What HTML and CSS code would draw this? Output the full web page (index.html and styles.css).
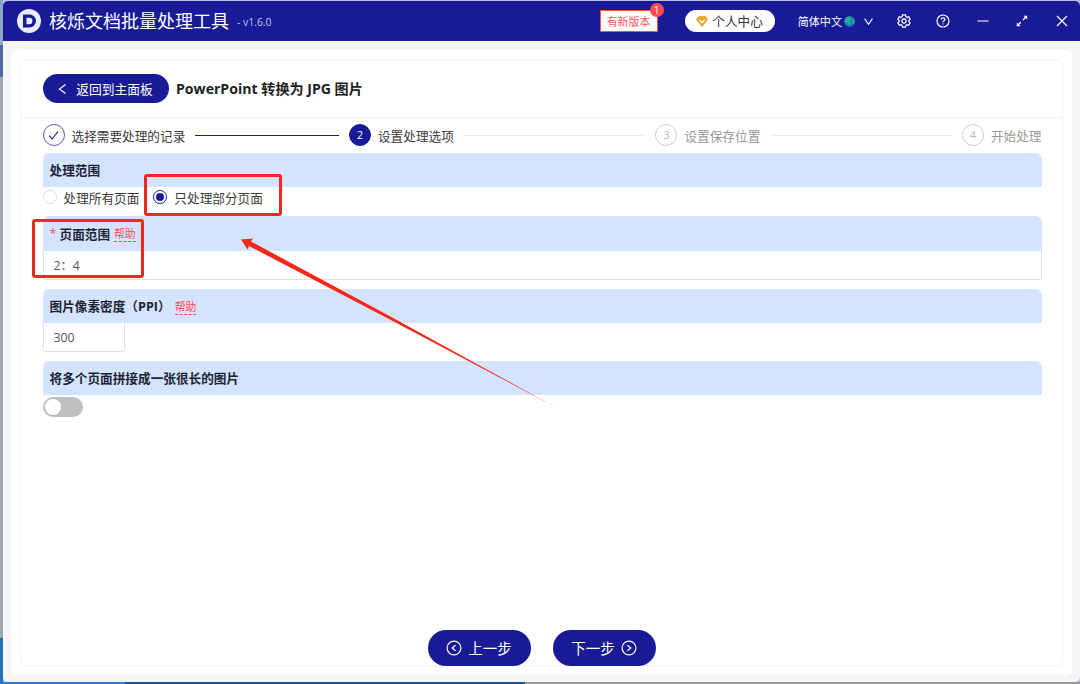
FILE: index.html
```html
<!DOCTYPE html>
<html lang="zh-CN">
<head>
  <meta charset="UTF-8">
  <meta name="viewport" content="width=device-width, initial-scale=1.0">
  <title>核烁文档批量处理工具</title>
  <link rel="stylesheet" href="styles.css">
</head>
<body>
  <div class="window">
    <header class="titlebar">
      <svg class="logo" viewBox="0 0 24 24">
        <circle cx="12" cy="12" r="12" fill="#e9ebff"/>
        <path d="M6 5.5h6.5a6.5 6.5 0 0 1 0 13H6z" fill="#181b95"/>
        <path d="M9.500 8.800h2.700a3.200 3.200 0 0 1 0 6.400H9.500z" fill="#e9ebff"/>
      </svg>
      <span class="app-name">核烁文档批量处理工具</span>
      <span class="version">- v1.6.0</span>

      <div class="new-version">有新版本<span class="badge">1</span></div>
      <div class="account">
        <svg class="gem" viewBox="0 0 12 11">
          <path d="M2.8 0h6.4L12 3.6 6 11 0 3.6z" fill="#f2a32c"/>
          <path d="M3.4 3.8 6 6.7l2.6-2.9" fill="none" stroke="#fff" stroke-width="1.3"/>
        </svg>
        <span>个人中心</span>
      </div>
      <div class="language">
        <span>简体中文</span>
        <svg class="globe" viewBox="0 0 12 12">
          <circle cx="6" cy="6" r="5.7" fill="#1f78bd"/>
          <path d="M1.2 3.2C3 .6 6 .2 7.5.9L6.7 3l1.8.8-2 2.2.8 2-2 2.6-1.6-2.8L.6 6z" fill="#20b08c"/>
          <path d="M8.8 1.2 11.4 4v3L9.6 9 8.4 6.6l1.3-2z" fill="#20b08c"/>
        </svg>
        <svg class="chevron" viewBox="0 0 12 12"><path d="M1.700 2.800 6 9l4.300-6.200"/></svg>
      </div>
      <div class="window-icons">
        <svg viewBox="0 0 14 14"><path d="M5.6.9h2.8l.5 1.8 1 .6 1.8-.5 1.4 2.4-1.3 1.3v1l1.3 1.3-1.4 2.4-1.8-.5-1 .6-.5 1.8H5.6l-.5-1.8-1-.6-1.8.5L.9 8.8 2.2 7.5v-1L.9 5.2l1.4-2.4 1.8.5 1-.6z"/><circle cx="7" cy="7" r="2.1"/></svg>
        <svg viewBox="0 0 14 14"><circle cx="7" cy="7" r="6"/><path d="M5.2 5.600c0-2.400 3.700-2.300 3.700-.1 0 1.300-1.900 1.300-1.900 2.700"/><path d="M7 9.400v1.200"/></svg>
        <svg viewBox="0 0 14 14"><path d="M1.500 7h11"/></svg>
        <svg viewBox="0 0 14 14"><path d="M3 11l3-3M8 6l3-3"/><path class="solid" d="M1.800 12.200V8.400l3.800 3.800zM12.200 1.800v3.800L8.400 1.800z"/></svg>
        <svg viewBox="0 0 14 14"><path d="M2 2l10 10M12 2 2 12"/></svg>
      </div>
    </header>

    <main class="panel">
      <div class="card">
        <div class="card-header">
          <button class="back">
            <svg viewBox="0 0 10 12"><path d="M8.500 1 1.500 6l7 5"/></svg>
            返回到主面板
          </button>
          <h1>PowerPoint 转换为 JPG 图片</h1>
        </div>

        <div class="card-body">
          <div class="steps">
            <div class="step done">
              <span class="step-icon"><svg viewBox="0 0 12 12"><path d="M1.3 6.2 4.5 9.8 10.8 1.800"/></svg></span>
              <span>选择需要处理的记录</span>
            </div>
            <div class="step active"><span class="step-icon">2</span><span>设置处理选项</span></div>
            <div class="step"><span class="step-icon">3</span><span>设置保存位置</span></div>
            <div class="step"><span class="step-icon">4</span><span>开始处理</span></div>
          </div>

          <section class="field">
            <h2>处理范围</h2>
            <div class="radios">
              <label class="radio"><i></i>处理所有页面</label>
              <label class="radio checked"><i></i>只处理部分页面</label>
            </div>
          </section>
          <section class="field">
            <h2 class="required"><b>*</b>页面范围<a class="help">帮助</a></h2>
            <div class="input">2：4</div>
          </section>
          <section class="field">
            <h2>图片像素密度（PPI）<a class="help">帮助</a></h2>
            <div class="input small">300</div>
          </section>
          <section class="field">
            <h2>将多个页面拼接成一张很长的图片</h2>
            <div class="switch"></div>
          </section>
        </div>

        <div class="actions">
          <button>
            <svg viewBox="0 0 16 16"><circle cx="8" cy="8" r="6.9"/><path d="M9.600 5.300 6.200 8l3.400 2.700"/></svg>
            <span>上一步</span>
          </button>
          <button>
            <span>下一步</span>
            <svg viewBox="0 0 16 16"><circle cx="8" cy="8" r="6.9"/><path d="M6.400 5.300 9.800 8l-3.400 2.700"/></svg>
          </button>
        </div>
      </div>
    </main>
  </div>

  <!-- annotations over the window -->
  <div class="mark mark-radio"></div>
  <div class="mark mark-range"></div>
  <svg class="arrow" viewBox="0 0 320 175">
    <defs>
      <linearGradient id="fade" x1="0" y1="0" x2="1" y2="0">
        <stop offset="0.85" stop-color="#f5261a"/>
        <stop offset="1" stop-color="#f5261a" stop-opacity="0.5"/>
      </linearGradient>
    </defs>
    <path d="M0 .5 12-.5 10 2.500 148.500 77 316 169 147 79.500 8 7 6.500 10.500z" fill="url(#fade)"/>
  </svg>
</body>
</html>
```

FILE: styles.css
```css
* {
  box-sizing: border-box;
}
body {
  margin: 0;
  height: 684px;
  padding: 1px 0 2px 3px;
  overflow: hidden;
  position: relative;
  font-family: 'Open Sans', 'Noto Sans CJK SC', sans-serif;
  font-size: 12.65px;
  color: #3a3a3a;
  background:
    linear-gradient(90deg, #2c7fd0 0 125px, #1d4f9c 125px 525px, #9b9b9b 525px) 0 100% / 100% 2px no-repeat,
    linear-gradient(#8fa5cc 0 45px, #52679f 45px 77px, #a3a7ab 77px 638px, #2a6fae 638px) 0 0 / 3px 100% no-repeat,
    #b5bde2;
}
svg {
  fill: none;
  flex: none;
  overflow: visible;
}
button {
  font-family: inherit;
  border: 0;
  color: #fff;
  background: #181b95;
  display: flex;
  align-items: center;
  justify-content: center;
  padding: 0;
}
.window {
  height: 681px;
  background: #f5f6f7;
  border-radius: 5px;
  overflow: hidden;
  display: flex;
  flex-direction: column;
}
.titlebar {
  height: 40px;
  flex: none;
  background: #181b95;
  color: #fff;
  display: flex;
  align-items: center;
  padding: 0 11px 0 14px;
}
.logo {
  width: 24px;
  height: 24px;
  margin: -1px 8px 0 0;
}
.app-name {
  font-size: 18px;
  line-height: 24px;
}
.version {
  font-size: 10.4px;
  color: #c0c3ee;
  margin: 2px 0 0 8px;
}
.new-version {
  position: relative;
  margin-left: auto;
  width: 58px;
  height: 22px;
  border: 1px solid #ff4d4f;
  background: #fff;
  color: #f45a5c;
  font-size: 11px;
  line-height: 21px;
  text-align: center;
}
.badge {
  position: absolute;
  top: -8px;
  right: -7px;
  width: 14px;
  height: 14px;
  border-radius: 50%;
  background: #ff4d4f;
  color: #fff;
  font-size: 10px;
  line-height: 14px;
}
.account {
  display: flex;
  align-items: center;
  justify-content: center;
  width: 90px;
  height: 22px;
  margin-left: 27px;
  border-radius: 11px;
  background: #fff;
  color: #333;
}
.account span {
  margin-top: -2px;
}
.gem {
  width: 12px;
  height: 11px;
  margin-right: 4px;
}
.language {
  display: flex;
  align-items: center;
  width: 99px;
  margin-left: 23px;
  font-size: 11.1px;
}
.globe {
  width: 11px;
  height: 11px;
  margin: 0 8px 0 2px;
}
.chevron {
  width: 11px;
  height: 11px;
}
.chevron,
.window-icons svg,
.back svg,
.step-icon svg,
.actions svg {
  stroke: currentColor;
  stroke-width: 1.2;
}
.window-icons {
  display: flex;
  gap: 25.6px;
}
.window-icons svg {
  width: 14px;
  height: 14px;
}
.window-icons .solid {
  fill: currentColor;
  stroke: none;
}
.panel {
  flex: 1;
  margin: 9px 8px 7px;
  padding: 9px;
  background: #fff;
  border-radius: 6px;
}
.card {
  height: 100%;
  border: 1px solid #f4f4f4;
  border-radius: 6px;
  display: flex;
  flex-direction: column;
}
.card-header {
  display: flex;
  align-items: center;
  height: 58px;
  padding: 0 21px;
  border-bottom: 1px solid #f2f2f2;
}
.back {
  width: 126px;
  height: 29px;
  margin-left: 0.5px;
  border-radius: 15px;
  font-size: 12.75px;
}
.back svg {
  width: 9px;
  height: 12px;
  margin-right: 9px;
}
h1 {
  margin: -2px 0 0 7.5px;
  font-size: 14.1px;
  font-weight: 700;
  color: #222;
}
.card-body {
  padding: 6px 20.5px 0 21.5px;
}
.steps {
  display: flex;
  height: 22px;
  margin-bottom: 7px;
}
.step {
  flex: 1;
  display: flex;
  align-items: center;
  gap: 7px;
  white-space: nowrap;
  color: #999;
}
.step:last-child {
  flex: none;
}
.step:not(:last-child)::after {
  content: "";
  flex: 1;
  height: 1px;
  margin: 0 10px 0 3px;
  background: #ececec;
}
.step-icon {
  display: flex;
  align-items: center;
  justify-content: center;
  width: 22px;
  height: 22px;
  border: 1px solid #ccc;
  border-radius: 50%;
  font-size: 10.5px;
  color: #bbb;
}
.step-icon svg {
  width: 11px;
  height: 11px;
}
.step.done,
.step.active {
  color: #3a3a3a;
}
.done .step-icon {
  border-color: #5a5cb5;
  color: #181b95;
}
.step.done::after {
  background: #181b95;
}
.active .step-icon {
  border-color: #181b95;
  background: #181b95;
  color: #fff;
}
.field {
  margin-bottom: 9px;
}
h2 {
  display: flex;
  align-items: center;
  height: 34px;
  margin: 0;
  padding: 0 7px 1px;
  border-radius: 6px 6px 0 0;
  background: #d4e3fe;
  font-size: 12.65px;
  font-weight: 700;
  color: #1c2434;
}
h2.required {
  height: 35px;
}
h2 b {
  width: 10px;
  font-weight: 400;
  color: #ff4d4f;
}
.help {
  margin: 2px 0 0 4px;
  font-size: 10.8px;
  font-weight: 400;
  line-height: 15px;
  color: #ff4d4f;
  border-bottom: 1px dashed #ff4d4f;
}
.radios {
  display: flex;
  gap: 14px;
  height: 20px;
}
.radio {
  display: flex;
  align-items: center;
  gap: 7px;
}
.radio i {
  display: flex;
  width: 14px;
  height: 14px;
  border: 1px solid #e0e0e0;
  border-radius: 50%;
}
.radio.checked i {
  border-color: #181b95;
}
.radio.checked i::after {
  content: "";
  width: 8px;
  height: 8px;
  margin: auto;
  border-radius: 50%;
  background: #181b95;
}
.input {
  height: 29px;
  padding: 0 10px;
  border: 1px solid #e0e0e0;
  border-top: 0;
  border-radius: 0 0 3px 3px;
  font-size: 12.3px;
  line-height: 30px;
  color: #555;
}
.input.small {
  width: 82px;
}
.switch {
  width: 40px;
  height: 20px;
  margin-top: 2px;
  padding: 2px;
  border-radius: 10px;
  background: #bfbfbf;
}
.switch::before {
  content: "";
  display: block;
  width: 16px;
  height: 16px;
  border-radius: 50%;
  background: #fff;
}
.actions {
  display: flex;
  justify-content: center;
  gap: 22px;
  margin: auto 0 -1px;
}
.actions button {
  gap: 6px;
  width: 103px;
  height: 36px;
  border-radius: 18px;
  font-size: 14.5px;
}
.actions span {
  margin-top: -2px;
}
.actions svg {
  width: 16px;
  height: 16px;
}
.mark {
  position: absolute;
  border: 3px solid #f5261a;
  border-radius: 3px;
}
.mark-radio {
  left: 144px;
  top: 174px;
  width: 138px;
  height: 42px;
}
.mark-range {
  left: 32px;
  top: 219px;
  width: 112px;
  height: 59px;
}
.arrow {
  position: absolute;
  left: 241px;
  top: 239px;
  width: 320px;
  height: 175px;
}
```
